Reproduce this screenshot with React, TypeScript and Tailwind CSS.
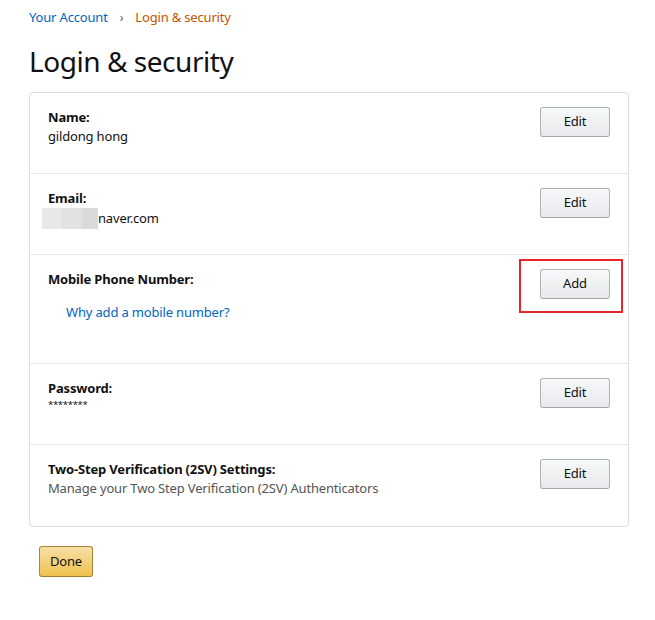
import React from "react";

type RowProps = {
  label: string;
  children?: React.ReactNode;
  action: string;
  height: string;
  highlight?: boolean;
  last?: boolean;
};

function GrayButton({ text }: { text: string }) {
  return (
    <button className="w-[70px] h-[30px] rounded-[3px] border border-[#adb1b8] border-b-[#a2a6ac] bg-gradient-to-b from-[#f7f8fa] to-[#e7e9ec] text-[13px] text-[#111] shadow-[inset_0_1px_0_rgba(255,255,255,0.6)]">
      {text}
    </button>
  );
}

function Row({ label, children, action, height, highlight, last }: RowProps) {
  return (
    <div
      className={`relative flex justify-between pl-[18px] pr-[18px] pt-[14px] ${height} ${
        last ? "" : "border-b border-[#e7e7e7]"
      }`}
    >
      <div className="pt-[1px] text-[13px] leading-[19px] text-[#111]">
        <div className="font-bold">{label}</div>
        {children}
      </div>
      <div className="shrink-0">
        <GrayButton text={action} />
      </div>
      {highlight && (
        <div className="absolute right-[5px] top-[4px] w-[104px] h-[54px] border-2 border-[#e8262c]" />
      )}
    </div>
  );
}

export default function App() {
  return (
    <div
      className="bg-white min-h-[620px] px-[29px] pt-[8px] tracking-[-0.17px]"
      style={{ fontFamily: '"Noto Sans", Arial, sans-serif' }}
    >
      {/* breadcrumb */}
      <div className="flex items-center text-[13px] leading-[19px]">
        <a className="text-[#0066c0]">Your Account</a>
        <span className="mx-[12px] text-[#555] text-[12px]">›</span>
        <span className="text-[#c45500]">Login &amp; security</span>
      </div>

      <h1 className="mt-[16px] text-[28px] leading-[36px] text-[#111] font-normal tracking-[-0.45px]">
        Login &amp; security
      </h1>

      <div className="mt-[13px] w-[600px] rounded-[4px] border border-[#dddddd]">
        <Row label="Name:" action="Edit" height="h-[81px]">
          <div>gildong hong</div>
        </Row>
        <Row label="Email:" action="Edit" height="h-[81px]">
          <div className="flex items-center">
            <div className="-ml-[6px] flex h-[21px]">
              <div className="w-[20px] bg-[#e8e8e8]" />
              <div className="w-[20px] bg-[#e2e2e2]" />
              <div className="w-[16px] bg-[#dadada]" />
            </div>
            <span>naver.com</span>
          </div>
        </Row>
        <Row label="Mobile Phone Number:" action="Add" height="h-[109px]" highlight>
          <a className="mt-[14px] ml-[18px] block text-[#0066c0]">Why add a mobile number?</a>
        </Row>
        <Row label="Password:" action="Edit" height="h-[81px]">
          <div className="text-[9.5px] leading-[14px] tracking-[-0.3px]">********</div>
        </Row>
        <Row
          label="Two-Step Verification (2SV) Settings:"
          action="Edit"
          height="h-[81px]"
          last
        >
          <div className="text-[#555]">Manage your Two Step Verification (2SV) Authenticators</div>
        </Row>
      </div>

      <button className="mt-[19px] ml-[10px] w-[54px] h-[31px] rounded-[3px] border border-[#a88734] border-b-[#9c7e31] bg-gradient-to-b from-[#f7dfa5] to-[#f0c14b] text-[13px] text-[#111]">
        Done
      </button>
    </div>
  );
}
